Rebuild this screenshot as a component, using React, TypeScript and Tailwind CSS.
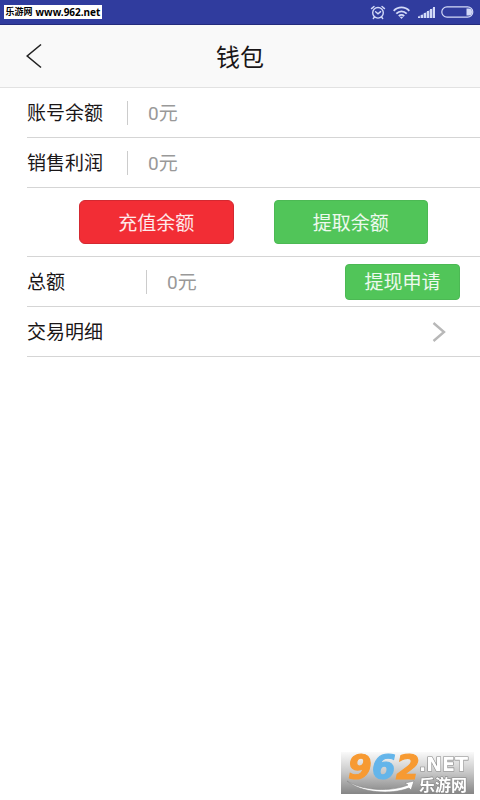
import type { ReactNode } from "react";

function StatusBar() {
  return (
    <div className="flex h-[25px] items-center justify-between border-b border-[#232b7c] bg-[#303c9e] pr-1.5 pl-1">
      <div className="flex h-[14px] w-[98px] items-center justify-center gap-[3px] bg-white font-['Noto_Sans','Noto_Sans_CJK_SC',sans-serif] text-[10px] leading-[14px] font-bold whitespace-nowrap text-black">
        <span className="text-[9px]">乐游网</span>
        <span>www.962.net</span>
      </div>
      <div className="flex items-center text-[#d3daf8]">
        <svg width="16" height="15" viewBox="0 0 16 15" fill="none" stroke="currentColor" strokeWidth="1.4" strokeLinecap="round">
          <circle cx="8" cy="7.8" r="5.3" />
          <path d="M5.6 6.8 8 8.8l2.6-2.2M1.5 3.6 4 1.5M14.5 3.6 12 1.5M4.5 12 3.3 13.5M11.5 12l1.2 1.5" />
        </svg>
        <svg className="ml-[7px]" width="17" height="13" viewBox="0 0 17 13" fill="none" stroke="currentColor" strokeWidth="1.9">
          <path d="M.7 4.8C5 .2 12 .2 16.3 4.8M3.3 7.6c3-3 7.4-3 10.4 0M5.8 10.2c1.6-1.6 3.8-1.6 5.4 0" />
          <path d="M8.5 13 6.5 10.8h4z" fill="currentColor" stroke="none" />
        </svg>
        <svg className="ml-2" width="17" height="12" viewBox="0 0 17 12" fill="currentColor">
          <path d="M0 12v-1.5h2V12zM3 12V9h2v3zM6 12V7h2v5zM9 12V5h2v7zM12 12V3h2v9zM15 12V1h2v11z" />
          <path d="M0 12v-1.5L17 1v11z" opacity=".4" />
        </svg>
        <svg className="ml-1.5" width="33" height="12" viewBox="0 0 33 12" fill="none" stroke="currentColor" strokeWidth="1.2">
          <rect x=".8" y=".8" width="31" height="10.4" rx="5.2" />
          <path d="M25.5 2.5h2.5a3 3.5 0 0 1 0 7h-2.5z" fill="currentColor" stroke="none" />
        </svg>
      </div>
    </div>
  );
}

function Row({ label, children }: { label: string; children?: ReactNode }) {
  return (
    <div className="flex h-[50px] items-center border-b border-[#d5d5d5] pr-5">
      <span className="min-w-[100px] text-[#1a1617]">{label}</span>
      {children}
    </div>
  );
}

function Amount({ value }: { value: string }) {
  return (
    <span className="flex h-6 items-center border-l border-[#ccc] pt-1 pl-5 font-[Roboto,'Noto_Sans_CJK_SC',sans-serif] text-[#999]">
      {value}
    </span>
  );
}

function Watermark() {
  return (
    <svg className="fixed right-[6px] bottom-0" width="133" height="60" viewBox="0 -12 133 60" aria-label="962.NET">
      <defs>
        <linearGradient id="plate" x1="0" y1="0" x2="0" y2="1">
          <stop offset="0" stopColor="#fafafa" />
          <stop offset=".5" stopColor="#c6c6c6" />
          <stop offset="1" stopColor="#858585" />
        </linearGradient>
      </defs>
      <rect width="133" height="42" fill="url(#plate)" />
      <path d="M6 29c16 10 44 11 61 4l-3-2 9-2-3 9-2-2C50 43 20 41 6 29z" fill="#fff" stroke="#888" strokeWidth=".6" />
      <g className="font-['DejaVu_Sans',sans-serif] text-[34px] font-bold italic" strokeWidth="1.2">
        <text x="7" y="27" fill="#f79a32" stroke="#f79a32">9</text>
        <text x="31" y="27" fill="#64b5ea" stroke="#64b5ea">6</text>
        <text x="55" y="27" fill="#f79a32" stroke="#f79a32">2</text>
      </g>
      <g fill="#fff" stroke="#888" strokeWidth="1.2" paintOrder="stroke">
        <text x="78" y="19" className="font-['DejaVu_Sans',sans-serif] text-[19px] font-bold">.NET</text>
        <text x="78" y="39" className="font-['DejaVu_Sans','Noto_Sans_CJK_SC',sans-serif] text-[16px] font-bold">乐游网</text>
      </g>
    </svg>
  );
}

export default function App() {
  return (
    <div className="min-h-screen bg-white font-['Noto_Sans_CJK_SC',sans-serif]">
      <StatusBar />
      <header className="grid h-[63px] grid-cols-[1fr_auto_1fr] items-center border-b border-[#e2e2e2] bg-[#f9f9f9]">
        <button type="button" aria-label="返回" className="ml-[26px] w-4">
          <svg width="16" height="26" viewBox="0 0 16 26" fill="none" stroke="#222" strokeWidth="1.6">
            <path d="M15 1.5 1.2 13 15 24.5" />
          </svg>
        </button>
        <h1 className="text-[24px] leading-9 text-[#1a1617]">钱包</h1>
      </header>
      <main className="pl-[27px] text-[19px]">
        <Row label="账号余额">
          <Amount value="0元" />
        </Row>
        <Row label="销售利润">
          <Amount value="0元" />
        </Row>
        <div className="flex h-[69px] items-center gap-10 border-b border-[#d5d5d5] px-[52px] text-white/90">
          <button type="button" className="h-11 flex-1 rounded-md border border-[#d32931] bg-[#f22d35]">
            充值余额
          </button>
          <button type="button" className="h-11 flex-1 rounded border border-[#4cb954] bg-[#51c559]">
            提取余额
          </button>
        </div>
        <Row label="总额">
          <span className="w-[19px]" />
          <Amount value="0元" />
          <button type="button" className="ml-auto h-9 w-[115px] rounded border border-[#4cb954] bg-[#51c559] text-white/90">
            提现申请
          </button>
        </Row>
        <Row label="交易明细">
          <button type="button" aria-label="交易明细" className="mr-3.5 ml-auto">
            <svg width="14" height="20" viewBox="0 0 14 20" fill="none" stroke="#b8b8b8" strokeWidth="2.4">
              <path d="M1.5 1 12 10 1.5 19" />
            </svg>
          </button>
        </Row>
      </main>
      <Watermark />
    </div>
  );
}
